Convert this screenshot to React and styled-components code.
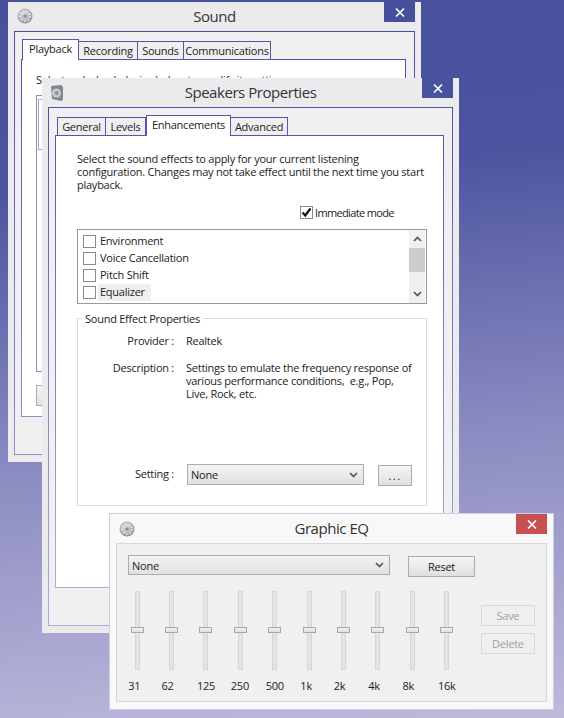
import React from "react";
import styled, { createGlobalStyle } from "styled-components";

const GlobalStyle = createGlobalStyle`
    html, body {
        margin: 0;
        padding: 0;
    }
    body {
        font-family: "Open Sans", "Liberation Sans", sans-serif;
        font-size: 11px;
        letter-spacing: -0.25px;
        color: #222;
    }
    * {
        box-sizing: border-box;
    }
`;

const Desktop = styled.div`
    position: relative;
    width: 564px;
    height: 718px;
    overflow: hidden;
    background: linear-gradient(175deg, #46509b 0%, #4c549f 25%, #8c8cc2 62%, #bdbadb 100%);
`;

const Window = styled.div`
    position: absolute;
    left: ${(p) => p.$left}px;
    top: ${(p) => p.$top}px;
    width: ${(p) => p.$width}px;
    height: ${(p) => p.$height}px;
    display: flex;
    flex-direction: column;
    padding: 0 6px 7px;
    background: ${(p) => p.$frame || "#ebebee"};
    ${(p) => p.$outline && `border: 1px solid ${p.$outline};`}
`;

const TitleBar = styled.div`
    position: relative;
    flex: none;
    height: 29px;
    margin: 0 -6px;
    padding-bottom: 2px;
    display: flex;
    align-items: center;
    justify-content: center;
    font-size: 15px;
    letter-spacing: -0.45px;
    color: #333;
`;

const TitleIcon = styled.svg`
    position: absolute;
    left: ${(p) => p.$left}px;
    top: ${(p) => p.$top}px;
`;

const CloseButton = styled.div`
    position: absolute;
    top: 0;
    right: ${(p) => p.$right}px;
    width: 31px;
    height: 20px;
    display: flex;
    align-items: center;
    justify-content: center;
    background: ${(p) => p.$color};
`;

const Panel = styled.div`
    flex: 1;
    display: flex;
    flex-direction: column;
    padding: 0 8px 37px 6px;
    background: #f0f0f0;
    border: 1px solid;
    border-image: linear-gradient(${(p) => p.$from}, ${(p) => p.$to}) 1;
`;

const TabStrip = styled.div`
    position: relative;
    z-index: 1;
    flex: none;
    height: 28px;
    margin-bottom: -1px;
    padding-left: ${(p) => p.$indent}px;
    display: flex;
    align-items: flex-end;
`;

const Tab = styled.div`
    width: ${(p) => p.$width}px;
    height: ${(p) => (p.$active ? 21 : 19)}px;
    padding-bottom: ${(p) => (p.$active ? 3 : 0)}px;
    display: flex;
    align-items: center;
    justify-content: center;
    white-space: nowrap;
    background: ${(p) => (p.$active ? "#fff" : "#efeff1")};
    border: 1px solid ${(p) => p.$line};
    border-left-width: ${(p) => (p.$active ? 1 : 0)}px;
    ${(p) => p.$first && "border-left-width: 1px;"}
    ${(p) => p.$active && "border-bottom: 0;"}
`;

const Page = styled.div`
    flex: 1;
    min-height: 0;
    background: #fff;
    border: 1px solid;
    border-image: linear-gradient(${(p) => p.$from}, ${(p) => p.$to}) 1;
    padding: ${(p) => p.$pad};
    display: flex;
    flex-direction: column;
`;

const Intro = styled.p`
    margin: 0;
    line-height: 13px;
    white-space: nowrap;
`;

const DeviceList = styled.div`
    width: 362px;
    height: 277px;
    margin-top: 9px;
    padding: 3px 0 0 1px;
    border: 1px solid #8f8fc4;
`;

const DeviceRow = styled.div`
    height: 51px;
    border: 1px solid #a2a2d0;
`;

const SoundFooter = styled.div`
    margin-top: 13px;
`;

const Button = styled.div`
    width: ${(p) => p.$width}px;
    height: ${(p) => p.$height || 21}px;
    margin-top: ${(p) => p.$top || 0}px;
    margin-left: ${(p) => p.$left || 0}px;
    flex: none;
    display: flex;
    align-items: center;
    justify-content: center;
    letter-spacing: ${(p) => (p.$spaced ? "1.5px" : "inherit")};
    border: 1px solid ${(p) => (p.$disabled ? "#d8d8d8" : "#acacac")};
    background: ${(p) => (p.$disabled ? "#efefef" : "linear-gradient(#f5f5f5, #dfdfdf)")};
    color: ${(p) => (p.$disabled ? "#a0a0a0" : "#222")};
`;

const ImmediateRow = styled.label`
    margin: 14px 0 0 223px;
    height: 14px;
    display: flex;
    align-items: center;
    gap: 2px;
    letter-spacing: -0.65px;
    white-space: nowrap;
`;

const CheckBox = styled.span`
    flex: none;
    width: 13px;
    height: 13px;
    display: flex;
    align-items: center;
    justify-content: center;
    background: #fff;
    border: 1px solid #8a8a8a;
`;

const EffectList = styled.div`
    width: 350px;
    height: 75px;
    margin-top: 10px;
    display: flex;
    overflow: hidden;
    border: 1px solid #999;
`;

const EffectItems = styled.div`
    flex: 1;
    padding: 3px 0 0 5px;
`;

const EffectRow = styled.div`
    height: 17px;
    display: flex;
    align-items: center;
    gap: 2px;
`;

const EffectName = styled.span`
    height: 17px;
    line-height: 15px;
    padding: 0 ${(p) => (p.$selected ? "6px" : "2px")} 0 2px;
    background: ${(p) => (p.$selected ? "#efefef" : "transparent")};
`;

const ScrollBar = styled.div`
    flex: none;
    width: 16px;
    margin-right: 1px;
    display: flex;
    flex-direction: column;
    background: #f0f0f0;
`;

const ScrollArrow = styled.div`
    flex: none;
    height: 18px;
    display: flex;
    align-items: center;
    justify-content: center;
`;

const ScrollTrack = styled.div`
    flex: 1;
`;

const ScrollThumb = styled.div`
    height: 24px;
    background: #cdcdcd;
`;

const Group = styled.fieldset`
    width: 350px;
    height: 194px;
    margin: 8px 0 0;
    padding: 9px 0 0;
    min-width: 0;
    border: 1px solid #dadada;
`;

const GroupTitle = styled.legend`
    margin-left: 4px;
    padding: 0 3px;
    line-height: 13px;
`;

const PropertyGrid = styled.div`
    display: grid;
    grid-template-columns: 96px 1fr;
    column-gap: 12px;
    row-gap: 14px;
    line-height: 13px;
`;

const PropertyName = styled.div`
    text-align: right;
    white-space: nowrap;
`;

const PropertyValue = styled.div`
    white-space: pre-wrap;
`;

const SettingRow = styled.div`
    margin-top: 64px;
    display: grid;
    grid-template-columns: 96px auto auto 1fr;
    column-gap: 12px;
    align-items: start;
`;

const SettingLabel = styled(PropertyName)`
    margin-top: 2px;
`;

const Combo = styled.div`
    width: ${(p) => p.$width}px;
    height: ${(p) => p.$height}px;
    margin-left: ${(p) => p.$left || 0}px;
    padding: 0 5px 0 3px;
    flex: none;
    display: flex;
    align-items: center;
    justify-content: space-between;
    border: 1px solid #acacac;
    background: linear-gradient(#f3f3f3, #e1e1e1);
`;

const EqPanel = styled.div`
    flex: 1;
    padding-top: 11px;
    background: #f0f0f0;
    border: 1px solid #d8d8d8;
`;

const EqTop = styled.div`
    margin-left: 11px;
    display: flex;
    align-items: flex-start;
`;

const EqBody = styled.div`
    margin: 14px 0 0 3px;
    display: flex;
`;

const Band = styled.div`
    width: 34.4px;
    display: flex;
    flex-direction: column;
    align-items: center;
`;

const SliderTrack = styled.div`
    position: relative;
    width: 5px;
    height: 79px;
    background: #e4e4e4;
    border: 1px solid #d6d6d6;
`;

const SliderThumb = styled.div`
    position: absolute;
    left: -5px;
    top: 35px;
    width: 13px;
    height: 6px;
    background: linear-gradient(#f2f2f2, #dedede);
    border: 1px solid #a8a8a8;
`;

const BandLabel = styled.div`
    width: 100%;
    margin-top: 9px;
    padding-right: ${(p) => p.$pad}px;
    line-height: 13px;
    text-align: center;
    white-space: nowrap;
`;

const EqSide = styled.div`
    margin: 14px 0 0 ${(p) => p.$left}px;
    display: flex;
    flex-direction: column;
    gap: 7px;
`;

const bands = [
    { label: "31", pad: 6 },
    { label: "62", pad: 8 },
    { label: "125", pad: 0 },
    { label: "250", pad: 1 },
    { label: "500", pad: 0 },
    { label: "1k", pad: 6 },
    { label: "2k", pad: 8 },
    { label: "4k", pad: 8 },
    { label: "8k", pad: 8 },
    { label: "16k", pad: 0 },
];

function Chevron({ up }) {
    return (
        <svg width="9" height="6" viewBox="0 0 9 6">
            <path
                d={up ? "M1 5 L4.5 1.5 L8 5" : "M1 1 L4.5 4.5 L8 1"}
                fill="none"
                stroke="#555"
                strokeWidth="1.7"
            />
        </svg>
    );
}

function CloseMark() {
    return (
        <svg width="10" height="9" viewBox="0 0 10 9">
            <path d="M1 .5 L9 8.5 M9 .5 L1 8.5" stroke="#fff" strokeWidth="1.6" />
        </svg>
    );
}

function DiskIcon({ left, top, gradientId }) {
    return (
        <TitleIcon $left={left} $top={top} width="16" height="16" viewBox="0 0 16 16">
            <defs>
                <radialGradient id={gradientId} cx="0.45" cy="0.4" r="0.65">
                    <stop offset="0" stopColor="#e6e6e6" />
                    <stop offset="0.6" stopColor="#b4b4b8" />
                    <stop offset="1" stopColor="#85868c" />
                </radialGradient>
            </defs>
            <circle cx="8" cy="8" r="7.5" fill={`url(#${gradientId})`} />
            <circle cx="8" cy="8" r="5" fill="none" stroke="#f2f2f2" strokeWidth="1.5" strokeDasharray="1.5 2" />
            <circle cx="8" cy="8" r="1.8" fill="#8d8e94" />
        </TitleIcon>
    );
}

function SpeakerIcon({ left, top }) {
    return (
        <TitleIcon $left={left} $top={top} width="12" height="16" viewBox="0 0 12 16">
            <path d="M0 1 L10 0 L12 2 L12 15 L10 16 L1 14 Z" fill="#7f8a90" />
            <circle cx="5.5" cy="8" r="4.5" fill="#c9ccce" />
            <circle cx="5.5" cy="8" r="2" fill="#8d9499" />
        </TitleIcon>
    );
}

function SoundWindow() {
    return (
        <Window $left={8} $top={2} $width={413} $height={460}>
            <TitleBar>
                Sound
                <DiskIcon left={9} top={6} gradientId="soundDisk" />
                <CloseButton $right={6} $color="#474f9b"><CloseMark /></CloseButton>
            </TitleBar>
            <Panel $from="#4b50a0" $to="#8f8ec6">
                <TabStrip $indent={1}>
                    <Tab $width={57} $active $first $line="#5357a5">Playback</Tab>
                    <Tab $width={59} $line="#5357a5">Recording</Tab>
                    <Tab $width={46} $line="#5357a5">Sounds</Tab>
                    <Tab $width={87} $line="#5357a5">Communications</Tab>
                </TabStrip>
                <Page $from="#4d52a2" $to="#8f8ec6" $pad="13px 0 0 14px">
                    <Intro>Select a playback device below to modify its settings:</Intro>
                    <DeviceList>
                        <DeviceRow />
                    </DeviceList>
                    <SoundFooter>
                        <Button $width={75} $height={21}>Configure</Button>
                    </SoundFooter>
                </Page>
            </Panel>
        </Window>
    );
}

function SpeakersWindow() {
    return (
        <Window $left={42} $top={78} $width={417} $height={555}>
            <TitleBar>
                Speakers Properties
                <SpeakerIcon left={9} top={7} />
                <CloseButton $right={6} $color="#4a529f"><CloseMark /></CloseButton>
            </TitleBar>
            <Panel $from="#4f53a2" $to="#b0aed8">
                <TabStrip $indent={2}>
                    <Tab $width={49} $first $line="#5357a5">General</Tab>
                    <Tab $width={40} $line="#5357a5">Levels</Tab>
                    <Tab $width={85} $active $first $line="#5357a5">Enhancements</Tab>
                    <Tab $width={57} $line="#5357a5">Advanced</Tab>
                </TabStrip>
                <Page $from="#5357a5" $to="#b0aed8" $pad="16px 0 0 21px">
                    <Intro>
                        Select the sound effects to apply for your current listening<br />
                        configuration. Changes may not take effect until the next time you start<br />
                        playback.
                    </Intro>
                    <ImmediateRow>
                        <CheckBox>
                            <svg width="11" height="11" viewBox="0 0 11 11">
                                <path d="M1.5 5.5 L4.2 8.5 L9.5 1.5" fill="none" stroke="#111" strokeWidth="2.2" />
                            </svg>
                        </CheckBox>
                        Immediate mode
                    </ImmediateRow>
                    <EffectList>
                        <EffectItems>
                            <EffectRow><CheckBox /><EffectName>Environment</EffectName></EffectRow>
                            <EffectRow><CheckBox /><EffectName>Voice Cancellation</EffectName></EffectRow>
                            <EffectRow><CheckBox /><EffectName>Pitch Shift</EffectName></EffectRow>
                            <EffectRow><CheckBox /><EffectName $selected>Equalizer</EffectName></EffectRow>
                            <EffectRow><CheckBox /></EffectRow>
                        </EffectItems>
                        <ScrollBar>
                            <ScrollArrow><Chevron up /></ScrollArrow>
                            <ScrollThumb />
                            <ScrollTrack />
                            <ScrollArrow><Chevron /></ScrollArrow>
                        </ScrollBar>
                    </EffectList>
                    <Group>
                        <GroupTitle>Sound Effect Properties</GroupTitle>
                        <PropertyGrid>
                            <PropertyName>Provider :</PropertyName>
                            <PropertyValue>Realtek</PropertyValue>
                            <PropertyName>Description :</PropertyName>
                            <PropertyValue>
                                {"Settings to emulate the frequency response of\nvarious performance conditions,  e.g., Pop,\nLive, Rock, etc."}
                            </PropertyValue>
                        </PropertyGrid>
                        <SettingRow>
                            <SettingLabel>Setting :</SettingLabel>
                            <Combo $width={177} $height={21} $left={1}>None <Chevron /></Combo>
                            <Button $width={34} $top={1} $left={2} $spaced>...</Button>
                        </SettingRow>
                    </Group>
                </Page>
            </Panel>
        </Window>
    );
}

function EqWindow() {
    return (
        <Window $left={109} $top={513} $width={445} $height={197} $frame="#f8f8f8" $outline="#cfcde6">
            <TitleBar>
                Graphic EQ
                <DiskIcon left={9} top={7} gradientId="eqDisk" />
                <CloseButton $right={6} $color="#c75050"><CloseMark /></CloseButton>
            </TitleBar>
            <EqPanel>
                <EqTop>
                    <Combo $width={262} $height={20}>None <Chevron /></Combo>
                    <Button $width={67} $top={1} $left={18}>Reset</Button>
                </EqTop>
                <EqBody>
                    {bands.map((band) => (
                        <Band key={band.label}>
                            <SliderTrack><SliderThumb /></SliderTrack>
                            <BandLabel $pad={band.pad}>{band.label}</BandLabel>
                        </Band>
                    ))}
                    <EqSide $left={17}>
                        <Button $width={54} $disabled>Save</Button>
                        <Button $width={54} $disabled>Delete</Button>
                    </EqSide>
                </EqBody>
            </EqPanel>
        </Window>
    );
}

export default function App() {
    return (
        <>
            <GlobalStyle />
            <Desktop>
                <SoundWindow />
                <SpeakersWindow />
                <EqWindow />
            </Desktop>
        </>
    );
}
